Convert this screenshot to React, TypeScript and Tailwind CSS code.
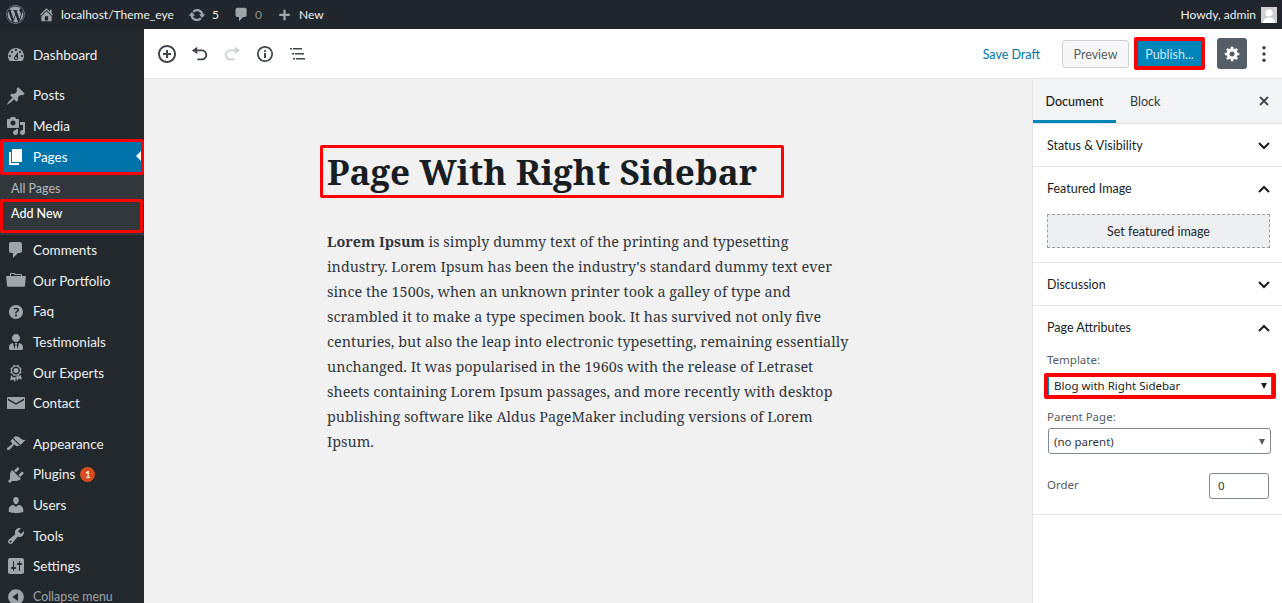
import React from "react";
import { FaWordpress, FaUserTie } from "react-icons/fa";

const P: Record<string, string> = {
  dashboard: "M3.76 16h12.48c1.1-1.37 1.76-3.11 1.76-5 0-4.42-3.58-8-8-8s-8 3.58-8 8c0 1.89.66 3.63 1.76 5zM10 4c.55 0 1 .45 1 1s-.45 1-1 1-1-.45-1-1 .45-1 1-1zM6 6c.55 0 1 .45 1 1s-.45 1-1 1-1-.45-1-1 .45-1 1-1zm8 0c.55 0 1 .45 1 1s-.45 1-1 1-1-.45-1-1 .45-1 1-1zm-5.37 5.55L12 7v6c0 1.1-.9 2-2 2s-2-.9-2-2c0-.57.24-1.08.63-1.45zM4 10c.55 0 1 .45 1 1s-.45 1-1 1-1-.45-1-1 .45-1 1-1zm12 0c.55 0 1 .45 1 1s-.45 1-1 1-1-.45-1-1 .45-1 1-1zm-5 3c0-.55-.45-1-1-1s-1 .45-1 1 .45 1 1 1 1-.45 1-1z",
  posts: "M10.44 3.02l1.82-1.82 6.36 6.35-1.83 1.82c-1.05-.68-2.48-.57-3.41.36l-.75.75c-.92.93-1.04 2.35-.35 3.41l-1.83 1.82-2.41-2.41-2.8 2.79c-.42.42-3.38 2.71-3.8 2.29s1.86-3.39 2.28-3.81l2.79-2.79L4.1 9.36l1.83-1.82c1.05.69 2.48.57 3.4-.36l.75-.75c.93-.92 1.05-2.35.36-3.41z",
  media: "M13 11V4c0-.55-.45-1-1-1h-1.67L9 1H5L3.67 3H2c-.55 0-1 .45-1 1v7c0 .55.45 1 1 1h10c.55 0 1-.45 1-1zM7 4.5c1.38 0 2.5 1.12 2.5 2.5S8.38 9.5 7 9.5 4.5 8.38 4.5 7 5.62 4.5 7 4.5zM14 6h5v10.5c0 1.38-1.12 2.5-2.5 2.5S14 17.88 14 16.5s1.12-2.5 2.5-2.5c.17 0 .34.02.5.05V9h-3V6zm-4 8.05V13h2v3.5c0 1.38-1.12 2.5-2.5 2.5S7 17.88 7 16.5 8.12 14 9.5 14c.17 0 .34.02.5.05z",
  pages: "M6 15V2h10v13H6zm-1 1h8v2H3V5h2v11z",
  comments: "M5 2h9c1.1 0 2 .9 2 2v7c0 1.1-.9 2-2 2h-2l-5 5v-5H5c-1.1 0-2-.9-2-2V4c0-1.1.9-2 2-2z",
  portfolio: "M4 5H.78c-.37 0-.74.32-.69.84l1 9.16c.05.41.4.69.81.69h16.2c.41 0 .76-.28.81-.69l1-9.16c.05-.52-.32-.84-.69-.84H16V3.99c0-.55-.45-1-1-1H9.5l-1-1H5c-.55 0-1 .45-1 1V5zm1 0V3h3l1 1h6v1H5z",
  help: "M17 10c0-3.87-3.14-7-7-7-3.87 0-7 3.13-7 7 0 3.86 3.13 7 7 7 3.86 0 7-3.14 7-7zm-6.3 1.48H9.14v-.43c0-.38.08-.7.24-.98s.46-.57.88-.89c.41-.29.68-.53.81-.71.14-.18.2-.39.2-.62 0-.25-.09-.44-.28-.58-.19-.13-.45-.19-.79-.19-.58 0-1.25.19-2 .57l-.64-1.28c.87-.49 1.8-.74 2.77-.74.81 0 1.45.2 1.92.58.48.39.71.91.71 1.55 0 .43-.09.8-.29 1.11-.19.32-.57.67-1.11 1.06-.38.28-.61.49-.71.63-.1.15-.15.34-.15.57v.35zm-1.47 2.74c-.18-.17-.27-.42-.27-.73 0-.33.08-.58.26-.75s.43-.25.77-.25c.32 0 .57.09.75.26s.27.42.27.74c0 .3-.09.55-.27.72-.18.18-.43.27-.75.27-.33 0-.58-.09-.76-.26z",
  awards: "M4.46 5.16L5 7.460l-.54 2.290 2.010 1.240L7.700 13l2.300-.54 2.300.54 1.230-2.010 2.010-1.240L15 7.460l.54-2.300-2-1.240-1.240-2.010-2.300.55-2.290-.54-1.250 2zm5.550 6.340c-2.210 0-4.010-1.790-4.010-4 0-2.220 1.800-4.010 4.010-4.010 2.200 0 4 1.790 4 4.010 0 2.210-1.800 4-4 4zM5.470 11.140L4.050 17.500l3.090-.98 1.870 2.480 1-4.590-1.300-.4-1.410.4c-.7-.7-1.350-1.130-1.830-2.270zm9.060 0c-.47 1.130-1.120 1.570-1.820 2.270l-1.410-.4-1.300.4 1 4.590 1.870-2.480 3.090.98zM10 5a2.500 2.500 0 1 1 0 5 2.500 2.500 0 0 1 0-5z",
  mail: "M2 4h16c.55 0 1 .45 1 1v10c0 .55-.45 1-1 1H2c-.55 0-1-.45-1-1V5c0-.55.45-1 1-1zm0 1.6v1.6l8 4.6 8-4.6V5.600l-8 4.600z",
  appearance: "M14.48 11.06L7.41 3.99l1.5-1.5c.5-.56 2.3-.47 3.51.32 1.21.8 1.43 1.28 2.91 2.1 1.18.64 2.45 1.26 4.45.85zm-.71.71L6.7 4.7 4.93 6.47c-.39.39-.39 1.02 0 1.41l1.06 1.06c.39.39.39 1.03 0 1.42-.6.6-1.43 1.11-2.21 1.69-.35.26-.7.53-1.01.84C1.43 13.23.4 14.98 1.2 15.8c.82.79 2.57-.23 3.91-1.57.31-.31.58-.66.85-1.02.57-.77 1.08-1.6 1.69-2.2.39-.39 1.02-.39 1.41 0l1.06 1.06c.39.39 1.02.39 1.41 0z",
  plugins: "M13.11 4.36L9.87 7.6 8 5.73l3.24-3.24c.35-.34 1.05-.2 1.56.32.52.51.66 1.21.31 1.55zm-8 1.77l.91-1.12 9.01 9.01-1.19.84c-.71.71-2.63 1.16-3.82 1.16H6.14L4.9 17.26c-.59.59-1.54.59-2.12 0-.59-.58-.59-1.53 0-2.12l1.24-1.24v-3.88c0-1.13.4-3.19 1.09-3.89zm7.26 3.97l3.24-3.24c.34-.35 1.04-.21 1.55.31.52.51.66 1.21.31 1.55l-3.24 3.25z",
  users: "M10 9.25c-2.27 0-2.73-3.44-2.73-3.44C7 4.02 7.82 2 9.97 2c2.16 0 2.98 2.02 2.71 3.81 0 0-.41 3.44-2.68 3.44zm0 2.57L12.72 10c2.39 0 4.52 2.33 4.52 4.53v2.49s-3.65 1.13-7.24 1.13c-3.65 0-7.24-1.13-7.24-1.13v-2.49c0-2.25 1.94-4.48 4.47-4.48z",
  tools: "M16.68 9.77c-1.34 1.34-3.3 1.67-4.95.99l-5.41 6.52c-.99.99-2.59.99-3.58 0s-.99-2.59 0-3.57l6.52-5.42c-.68-1.65-.35-3.61.99-4.95 1.28-1.28 3.12-1.62 4.72-1.06l-2.89 2.89 2.82 2.82 2.86-2.87c.53 1.58.18 3.39-1.08 4.65zM3.81 16.21c.4.39 1.04.39 1.43 0 .4-.4.4-1.04 0-1.43-.39-.4-1.03-.4-1.43 0-.39.39-.39 1.03 0 1.43z",
  settings: "M18 16V4c0-1.1-.9-2-2-2H4c-1.1 0-2 .9-2 2v12c0 1.1.9 2 2 2h12c1.1 0 2-.9 2-2zM8 11h1c.55 0 1 .45 1 1s-.45 1-1 1H8v1.5c0 .28-.22.5-.5.5s-.5-.22-.5-.5V13H6c-.55 0-1-.45-1-1s.45-1 1-1h1V5.500c0-.28.22-.5.5-.5s.5.22.5.5V11zm5-2h-1c-.55 0-1-.45-1-1s.45-1 1-1h1V5.500c0-.28.22-.5.5-.5s.5.22.5.5V7h1c.55 0 1 .45 1 1s-.45 1-1 1h-1v5.500c0 .28-.22.5-.5.5s-.5-.22-.5-.5V9z",
  collapse: "M10 2.160c4.330 0 7.840 3.510 7.840 7.840s-3.510 7.840-7.840 7.840S2.160 14.330 2.160 10 5.710 2.160 10 2.160zm2 11.720V6.120L6.180 9.970z",
  update: "M10.200 3.280c3.530 0 6.430 2.610 6.920 6h2.080l-3.500 4-3.500-4h2.320c-.45-1.970-2.210-3.450-4.320-3.450-1.450 0-2.730.71-3.540 1.780L4.950 5.660C6.230 4.200 8.110 3.280 10.200 3.280zm-.4 13.440c-3.520 0-6.430-2.610-6.920-6H.8l3.500-4c1.170 1.330 2.330 2.670 3.500 4H5.480c.45 1.970 2.210 3.450 4.320 3.450 1.450 0 2.730-.71 3.540-1.780l1.710 1.950c-1.280 1.460-3.150 2.380-5.250 2.380z",
  home: "M16 8.500l1.530 1.530-1.060 1.060L10 4.620l-6.470 6.470-1.060-1.060L10 2.500l4 4v-2h2v4zm-6-2.460l6 5.990V18H4v-5.970zM12 17v-5H8v5h4z",
  plus: "M17 9v3h-5.500v5.500h-3V12H3V9h5.500V3.500h3V9z",
  gear: "M18 12h-2.180c-.17.7-.44 1.350-.81 1.930l1.540 1.540-2.100 2.100-1.540-1.540c-.58.36-1.230.63-1.910.79V19H8v-2.180c-.68-.16-1.330-.43-1.910-.79l-1.540 1.540-2.120-2.120 1.540-1.540c-.36-.58-.63-1.230-.79-1.910H1V9.030h2.170c.16-.7.44-1.350.8-1.940L2.430 5.550l2.100-2.100 1.540 1.540c.58-.37 1.240-.64 1.930-.81V2h3v2.180c.68.16 1.330.43 1.910.79l1.540-1.540 2.120 2.120-1.540 1.540c.36.59.64 1.240.8 1.940H18V12zm-8.500 1.500c1.660 0 3-1.340 3-3s-1.340-3-3-3-3 1.340-3 3 1.340 3 3 3z",
};

function Dash({ d, className }: { d: string; className?: string }) {
  return (
    <svg viewBox="0 0 20 20" className={className} fill="currentColor" fillRule="evenodd">
      <path d={d} />
    </svg>
  );
}

function MenuRow({ icon, label, active, dim, badge }: { icon: React.ReactNode; label: string; active?: boolean; dim?: boolean; badge?: string }) {
  return (
    <div className={`relative flex h-[30.6px] items-center pl-[6px] ${dim ? "text-[12.4px] text-[#9ea3a8]" : active ? "bg-[#0073aa] text-[13.5px] text-white" : "text-[13.5px] text-[#eef0f1]"}`}>
      <span className={`flex w-[20px] h-[20px] items-center justify-center ${active ? "text-white" : "text-[#a0a5aa]"}`}>{icon}</span>
      <span className="ml-[7px]">{label}</span>
      {badge && (
        <span className="ml-[5px] flex h-[15px] w-[15px] items-center justify-center rounded-full bg-[#d54e21] text-[9px] font-bold text-white">{badge}</span>
      )}
      {active && (
        <>
          <span className="absolute right-[3px] top-[10px] h-0 w-0 border-y-[5px] border-r-[5px] border-y-transparent border-r-white" />
          <span className="absolute left-0 right-0 top-[-2px] bottom-[-3px] rounded-[2px] border-[3px] border-[#ff0000]" />
        </>
      )}
    </div>
  );
}

const ic = "w-[20px] h-[20px]";

function Chevron({ up }: { up?: boolean }) {
  return (
    <svg viewBox="0 0 12 8" className="h-[8px] w-[12px]" fill="none" stroke="#191e23" strokeWidth="2">
      <path d={up ? "M1 7l5-5 5 5" : "M1 1l5 5 5-5"} />
    </svg>
  );
}

function Arrow({ color }: { color: string }) {
  return (
    <svg viewBox="0 0 6 6" className="h-[6px] w-[6px]" fill={color}>
      <path d="M0 0h6L3 6z" />
    </svg>
  );
}

function Panel({ title, up, children, h }: { title: string; up?: boolean; children?: React.ReactNode; h: string }) {
  return (
    <div className={`border-b border-[#e2e4e7] ${h}`}>
      <div className="flex h-[43px] items-center justify-between pl-[14px] pr-[12px] text-[12.5px] text-[#191e23]">
        <span className="pt-[2px]">{title}</span>
        <Chevron up={up} />
      </div>
      {children}
    </div>
  );
}

const lines = [
  <><b className="font-bold">Lorem Ipsum</b> is simply dummy text of the printing and typesetting</>,
  "industry. Lorem Ipsum has been the industry's standard dummy text ever",
  "since the 1500s, when an unknown printer took a galley of type and",
  "scrambled it to make a type specimen book. It has survived not only five",
  "centuries, but also the leap into electronic typesetting, remaining essentially",
  "unchanged. It was popularised in the 1960s with the release of Letraset",
  "sheets containing Lorem Ipsum passages, and more recently with desktop",
  "publishing software like Aldus PageMaker including versions of Lorem",
  "Ipsum.",
];

export default function App() {
  return (
    <div className="flex h-[603px] w-[1282px] flex-col overflow-hidden font-['Lato','Liberation_Sans',sans-serif]">
      {/* admin bar */}
      <div className="flex h-[29px] shrink-0 items-center bg-[#20262b] pl-[6px] pr-[5px] text-[12px] text-[#eef0f1]">
        <FaWordpress className="h-[19px] w-[19px] text-[#a0a5aa]" />
        <Dash d={P.home} className="ml-[13px] h-[17px] w-[17px] text-[#a0a5aa]" />
        <span className="ml-[6px] w-[114px] whitespace-nowrap">localhost/Theme_eye</span>
        <Dash d={P.update} className="ml-[13px] h-[18px] w-[18px] text-[#a0a5aa]" />
        <span className="ml-[6px] w-[8px]">5</span>
        <Dash d={P.comments} className="ml-[13px] h-[17px] w-[17px] text-[#a0a5aa]" />
        <span className="ml-[5px] w-[8px] text-[#8d9297]">0</span>
        <Dash d={P.plus} className="ml-[14px] h-[15px] w-[15px] text-[#a0a5aa]" />
        <span className="ml-[7px]">New</span>
        <span className="ml-auto">Howdy, admin</span>
        <span className="ml-[5px] flex h-[16px] w-[16px] items-end justify-center overflow-hidden bg-[#d0d0d0]">
          <svg viewBox="0 0 16 16" className="h-[16px] w-[16px]" fill="#fff"><circle cx="8" cy="6" r="3.500" /><path d="M2 16c0-4 3-5.500 6-5.500s6 1.500 6 5.500z" /></svg>
        </span>
      </div>

      <div className="flex min-h-0 flex-1">
        {/* left menu */}
        <div className="w-[144px] shrink-0 bg-[#23282d] pt-[10.7px]">
          <MenuRow icon={<Dash d={P.dashboard} className={ic} />} label="Dashboard" />
          <div className="h-[10px]" />
          <MenuRow icon={<Dash d={P.posts} className={ic} />} label="Posts" />
          <MenuRow icon={<Dash d={P.media} className={ic} />} label="Media" />
          <MenuRow active icon={<Dash d={P.pages} className={ic} />} label="Pages" />
          <div className="h-[63px] bg-[#32373c] pt-[5px] text-[12.500px]">
            <div className="flex h-[25px] items-center pl-[11px] text-[#b4b9be]">All Pages</div>
            <div className="relative flex h-[25px] items-center pl-[11px] font-medium text-white">
              Add New
              <span className="absolute left-0 right-[1px] top-[-3px] bottom-[-6px] rounded-[2px] border-[3px] border-[#ff0000]" />
            </div>
          </div>
          <MenuRow icon={<Dash d={P.comments} className={ic} />} label="Comments" />
          <MenuRow icon={<Dash d={P.portfolio} className={ic} />} label="Our Portfolio" />
          <MenuRow icon={<Dash d={P.help} className={ic} />} label="Faq" />
          <MenuRow icon={<FaUserTie className="h-[16px] w-[16px]" />} label="Testimonials" />
          <MenuRow icon={<Dash d={P.awards} className={ic} />} label="Our Experts" />
          <MenuRow icon={<Dash d={P.mail} className={ic} />} label="Contact" />
          <div className="h-[10px]" />
          <MenuRow icon={<Dash d={P.appearance} className={ic} />} label="Appearance" />
          <MenuRow icon={<Dash d={P.plugins} className={ic} />} label="Plugins" badge="1" />
          <MenuRow icon={<Dash d={P.users} className={ic} />} label="Users" />
          <MenuRow icon={<Dash d={P.tools} className={ic} />} label="Tools" />
          <MenuRow icon={<Dash d={P.settings} className={ic} />} label="Settings" />
          <MenuRow dim icon={<Dash d={P.collapse} className={ic} />} label="Collapse menu" />
        </div>

        {/* editor */}
        <div className="flex min-w-0 flex-1 flex-col">
          <div className="flex h-[50px] shrink-0 items-center border-b border-[#e2e4e7] bg-white pl-[13px] pr-[8px]">
            <div className="flex items-center gap-[12.500px] text-[#555d66]">
              <Dash d="M10 1c-5 0-9 4-9 9s4 9 9 9 9-4 9-9-4-9-9-9zm0 16c-3.900 0-7-3.100-7-7s3.100-7 7-7 7 3.100 7 7-3.100 7-7 7zm1-11H9v3H6v2h3v3h2v-3h3V9h-3V6z" className="h-[20px] w-[20px] text-[#40464d]" />
              <Dash d="M12 5H7V2L1 6l6 4V7h5c2.200 0 4 1.800 4 4s-1.800 4-4 4H7v2h5c3.300 0 6-2.700 6-6s-2.700-6-6-6z" className="h-[18px] w-[20px] text-[#40464d]" />
              <Dash d="M8 5h5V2l6 4-6 4V7H8c-2.200 0-4 1.800-4 4s1.800 4 4 4h5v2H8c-3.300 0-6-2.700-6-6s2.700-6 6-6z" className="h-[18px] w-[20px] text-[#d0d3d6]" />
              <Dash d="M10 2c4.420 0 8 3.580 8 8s-3.580 8-8 8-8-3.580-8-8 3.580-8 8-8zm0 1.700a6.300 6.300 0 100 12.600 6.300 6.300 0 000-12.600zM11 7c0-.55-.45-1-1-1s-1 .45-1 1 .45 1 1 1 1-.45 1-1zm0 7V9H9v5h2z" className="h-[20px] w-[20px] text-[#40464d]" />
              <Dash d="M3 4h2v1.500H3zM6 4h9v1.500H6zM5 9h2v1.500H5zM8 9h9v1.500H8zM6 14h2v1.500H6zM9 14h9v1.500H9z" className="h-[20px] w-[20px] text-[#40464d]" />
            </div>
            <span className="ml-auto pt-[3px] text-[12.500px] text-[#0073aa]">Save Draft</span>
            <span className="ml-[22px] flex h-[28px] w-[67px] items-center justify-center rounded-[3px] border border-[#ccd0d4] bg-[#f7f7f7] pt-[3px] text-[12.500px] text-[#555d66]">Preview</span>
            <span className="ml-[5px] flex h-[33px] w-[71px] items-center justify-center rounded-[2px] border-[4px] border-[#ff0000] bg-[#0085ba] pt-[3px] text-[12.500px] text-[#cfe6f0]">Publish...</span>
            <span className="ml-[12px] flex h-[31px] w-[30px] items-center justify-center rounded-[3px] bg-[#555d66] text-white">
              <Dash d={P.gear} className="h-[17px] w-[17px]" />
            </span>
            <svg viewBox="0 0 4 18" className="ml-[15px] mr-[8px] h-[16px] w-[4px]" fill="#40464d"><circle cx="2" cy="2" r="2" /><circle cx="2" cy="9" r="2" /><circle cx="2" cy="16" r="2" /></svg>
          </div>

          <div className="flex min-h-0 flex-1">
            <div className="min-w-0 flex-1 bg-[#f1f1f1] pl-[183px] font-['Noto_Serif','DejaVu_Serif',serif] text-[#191e23]">
              <div className="mt-[66px] ml-[-7px] flex h-[53px] w-[464px] items-center rounded-[2px] border-[3px] border-[#ff0000] pl-[4px] text-[35.1px] font-bold whitespace-nowrap">
                Page With Right Sidebar
              </div>
              <div className="mt-[31px] text-[14.4px] leading-[25px] whitespace-nowrap text-[#32373c]">
                {lines.map((l, i) => (
                  <div key={i}>{l}</div>
                ))}
              </div>
            </div>

            <div className="w-[250px] shrink-0 border-l border-[#e2e4e7] bg-white">
              <div className="flex h-[45px] items-stretch border-b border-[#e2e4e7] bg-[#f3f4f5] text-[12.500px]">
                <span className="flex w-[83px] items-center justify-center border-b-[3px] border-[#0085ba] pt-[6px] font-medium text-[#191e23]">Document</span>
                <span className="ml-[14px] flex items-center pt-[3px] text-[#32373c]">Block</span>
                <svg viewBox="0 0 10 10" className="ml-auto mr-[13px] h-[10px] w-[10px] self-center" fill="none" stroke="#40464d" strokeWidth="1.800"><path d="M1 1l8 8M9 1l-8 8" /></svg>
              </div>
              <Panel title="Status & Visibility" h="h-[43px]" />
              <Panel title="Featured Image" up h="h-[96px]">
                <div className="ml-[14px] mr-[12px] mt-[4px] flex h-[34px] items-center justify-center border border-dashed border-[#9a9fa4] bg-[#edeff0] pt-[2px] text-[12.500px] text-[#23282d]">
                  Set featured image
                </div>
              </Panel>
              <Panel title="Discussion" h="h-[43px]" />
              <Panel title="Page Attributes" up h="h-[209px]">
                <div className="px-[14px] font-['Noto_Sans','Liberation_Sans',sans-serif] text-[11.500px] text-[#555d66]">
                  <div className="mt-[3px] leading-[16px]">Template:</div>
                  <div className="ml-[-3px] mr-[-8px] mt-[5px] h-[26px] rounded-[2px] border-[4px] border-[#ff0000] bg-white">
                    <div className="flex h-full items-center justify-between border-x border-[#0085ba] pl-[5px] pr-[4px] text-[#191e23]">
                      <span>Blog with Right Sidebar</span>
                      <Arrow color="#191e23" />
                    </div>
                  </div>
                  <div className="mt-[10px] leading-[16px]">Parent Page:</div>
                  <div className="ml-[1px] mr-[-3px] mt-[3px] flex h-[26px] items-center justify-between rounded-[3px] border border-[#7e8993] bg-white pl-[5px] pr-[5px] pt-[1px] text-[#32373c]">
                    <span>(no parent)</span>
                    <Arrow color="#555d66" />
                  </div>
                  <div className="mr-[-1px] mt-[19px] flex items-start justify-between">
                    <span className="leading-[24px]">Order</span>
                    <span className="flex h-[26px] w-[60px] items-center rounded-[3px] border border-[#7e8993] pl-[8px] text-[#32373c]">0</span>
                  </div>
                </div>
              </Panel>
            </div>
          </div>
        </div>
      </div>
    </div>
  );
}
